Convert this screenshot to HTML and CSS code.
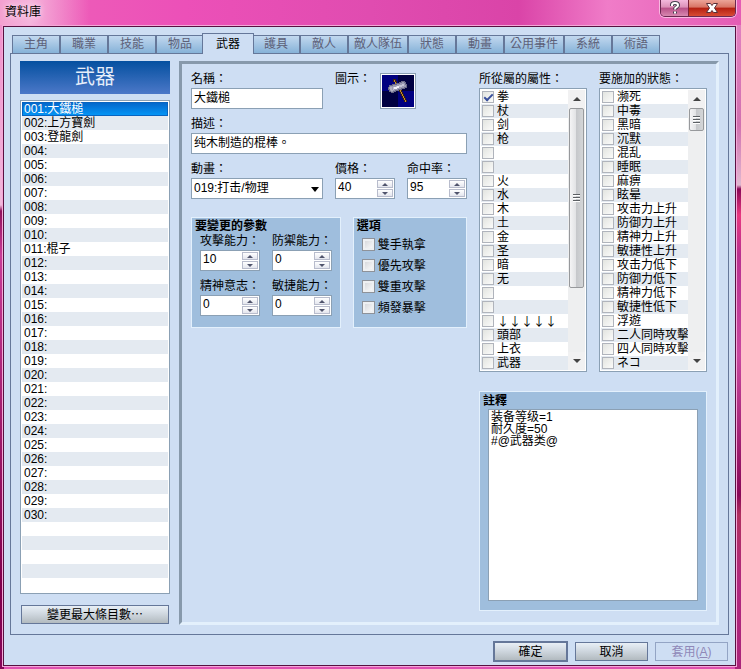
FILE: index.html
```html
<!DOCTYPE html>
<html lang="zh-Hant">
<head>
<meta charset="utf-8">
<title>資料庫</title>
<link rel="stylesheet" href="styles.css">
</head>
<body>
<header class="titlebar">
  <h1 class="caption">資料庫</h1>
  <div class="caption-buttons">
    <button class="cap cap-help" type="button" aria-label="說明">
      <svg width="12" height="14" viewBox="0 0 12 14"><path d="M3 5V4q0-2 3-2t3 2.200q0 1.300-1.500 2T6 8.500M6 10.500v2" fill="none" stroke="#454050" stroke-width="4"/><path d="M3 5V4q0-2 3-2t3 2.200q0 1.300-1.500 2T6 8.500M6 10.500v2" fill="none" stroke="#fff" stroke-width="2"/></svg>
    </button>
    <button class="cap cap-close" type="button" aria-label="關閉">
      <svg width="14" height="12" viewBox="0 0 14 12"><path d="M1.500 1.500h4L7 3.500l1.500-2h4L9.500 6l3 4.500h-4L7 8.500l-1.500 2h-4L4.500 6z" fill="#fff" stroke="#5a3038"/></svg>
    </button>
  </div>
</header>
<main class="window">
  <nav class="tabs" role="tablist">
    <button class="tab" role="tab">主角</button>
    <button class="tab" role="tab">職業</button>
    <button class="tab" role="tab">技能</button>
    <button class="tab" role="tab">物品</button>
    <button class="tab active" role="tab" aria-selected="true">武器</button>
    <button class="tab" role="tab">護具</button>
    <button class="tab" role="tab">敵人</button>
    <button class="tab wide" role="tab">敵人隊伍</button>
    <button class="tab" role="tab">狀態</button>
    <button class="tab" role="tab">動畫</button>
    <button class="tab wide" role="tab">公用事件</button>
    <button class="tab" role="tab">系統</button>
    <button class="tab" role="tab">術語</button>
  </nav>
  <section class="page">
    <aside class="side">
      <h2 class="banner">武器</h2>
      <ul class="records" role="listbox" aria-label="武器">
        <li class="selected" role="option" aria-selected="true">001:大鐵槌</li>
        <li>002:上方寶劍</li><li>003:登龍劍</li><li>004:</li><li>005:</li>
        <li>006:</li><li>007:</li><li>008:</li><li>009:</li><li>010:</li>
        <li>011:棍子</li><li>012:</li><li>013:</li><li>014:</li><li>015:</li>
        <li>016:</li><li>017:</li><li>018:</li><li>019:</li><li>020:</li>
        <li>021:</li><li>022:</li><li>023:</li><li>024:</li><li>025:</li>
        <li>026:</li><li>027:</li><li>028:</li><li>029:</li><li>030:</li>
        <li></li><li></li><li></li><li></li><li></li>
      </ul>
      <button class="btn max-btn" type="button">變更最大條目數⋯</button>
    </aside>
    <div class="editor">
      <div class="form">
        <div class="row">
          <div class="field grow2">
            <label for="name">名稱：</label>
            <input class="box" id="name" type="text" value="大鐵槌">
          </div>
          <div class="icon-field grow2">
            <span>圖示：</span>
            <button class="icon-box" type="button" aria-label="圖示">
              <svg width="32" height="32" viewBox="0 0 32 32" shape-rendering="crispEdges">
                <rect width="32" height="32" fill="#000040"/>
                <path d="M0 0h16v16H0zM16 16h16v16H16z" fill="#000080"/>
                <path d="M11 4h3v2h1v3h-2V7h-2zM17 15h3v2h1v2h1v2h1v2h1v2h1v2h-3v-2h-1v-2h-1v-2h-1v-2h-1v-2h-1z" fill="#3c2408"/>
                <path d="M12 5h1v2h1v2h-1V7h-1zM18 15h1v2h1v2h1v2h1v2h1v2h1v2h-1v-2h-1v-2h-1v-2h-1v-2h-1v-2h-1z" fill="#c08838"/>
                <path d="M6 12h1v-2h3V9h4V8h3V7h2V6h4v1h1v2h1v4h-2v1h-3v1h-3v1h-3v1h-2v1H9v-1H7v-2H6z" fill="#6c6c88"/>
                <path d="M7 12h1v-1h3v-1h4V9h3V8h2V7h2v1h1v2h1v2h-2v1h-3v1h-3v1h-3v1h-2v1H9v-1H8v-2H7z" fill="#9c9cb4"/>
                <path d="M11 12h3v-1h3v-1h3V9h2v2h-2v1h-3v1h-3v1h-2v1h-1z" fill="#c4c4d4"/>
                <path d="M12 12h3v-1h2v2h-2v1h-3z" fill="#f0f0f8"/>
                <path d="M8 12h2v3h1v1H9v-1H8z" fill="#b4b4c4"/>
              </svg>
            </button>
          </div>
        </div>
        <div class="row">
          <div class="field grow4">
            <label for="desc">描述：</label>
            <input class="box" id="desc" type="text" value="纯木制造的棍棒。">
          </div>
        </div>
        <div class="row">
          <div class="field grow2">
            <label for="anim">動畫：</label>
            <div class="combo">
              <select class="box" id="anim"><option>019:打击/物理</option></select>
              <svg class="arrow" width="8" height="5" viewBox="0 0 8 5"><path d="M0 0h8L4 5z"/></svg>
            </div>
          </div>
          <div class="field grow1">
            <label for="price">價格：</label>
            <div class="spin"><input id="price" type="text" value="40"><span class="steps"><button class="up" type="button" aria-label="增加"></button><button class="down" type="button" aria-label="減少"></button></span></div>
          </div>
          <div class="field grow1">
            <label for="hit">命中率：</label>
            <div class="spin"><input id="hit" type="text" value="95"><span class="steps"><button class="up" type="button" aria-label="增加"></button><button class="down" type="button" aria-label="減少"></button></span></div>
          </div>
        </div>
        <div class="groups">
          <section class="group params">
            <h3>要變更的參數</h3>
            <div class="param-grid">
              <div class="field">
                <label for="atk">攻擊能力：</label>
                <div class="spin"><input id="atk" type="text" value="10"><span class="steps"><button class="up" type="button" aria-label="增加"></button><button class="down" type="button" aria-label="減少"></button></span></div>
              </div>
              <div class="field">
                <label for="def">防禦能力：</label>
                <div class="spin"><input id="def" type="text" value="0"><span class="steps"><button class="up" type="button" aria-label="增加"></button><button class="down" type="button" aria-label="減少"></button></span></div>
              </div>
              <div class="field">
                <label for="spi">精神意志：</label>
                <div class="spin"><input id="spi" type="text" value="0"><span class="steps"><button class="up" type="button" aria-label="增加"></button><button class="down" type="button" aria-label="減少"></button></span></div>
              </div>
              <div class="field">
                <label for="agi">敏捷能力：</label>
                <div class="spin"><input id="agi" type="text" value="0"><span class="steps"><button class="up" type="button" aria-label="增加"></button><button class="down" type="button" aria-label="減少"></button></span></div>
              </div>
            </div>
          </section>
          <section class="group options">
            <h3>選項</h3>
            <label class="option"><input type="checkbox">雙手執拿</label>
            <label class="option"><input type="checkbox">優先攻擊</label>
            <label class="option"><input type="checkbox">雙重攻擊</label>
            <label class="option"><input type="checkbox">頻發暴擊</label>
          </section>
        </div>
      </div>
      <div class="right">
        <div class="lists">
          <div class="field">
            <span class="heading">所從屬的屬性：</span>
            <div class="checklist">
              <div class="items">
                <label><input type="checkbox" checked>拳</label>
                <label><input type="checkbox">杖</label>
                <label><input type="checkbox">剑</label>
                <label><input type="checkbox">枪</label>
                <label><input type="checkbox"></label>
                <label><input type="checkbox"></label>
                <label><input type="checkbox">火</label>
                <label><input type="checkbox">水</label>
                <label><input type="checkbox">木</label>
                <label><input type="checkbox">土</label>
                <label><input type="checkbox">金</label>
                <label><input type="checkbox">圣</label>
                <label><input type="checkbox">暗</label>
                <label><input type="checkbox">无</label>
                <label><input type="checkbox"></label>
                <label><input type="checkbox"></label>
                <label class="arrows"><input type="checkbox">↓↓↓↓↓</label>
                <label><input type="checkbox">頭部</label>
                <label><input type="checkbox">上衣</label>
                <label><input type="checkbox">武器</label>
              </div>
              <div class="scroll">
                <button class="sb-up" type="button" aria-label="向上"></button>
                <div class="track"><div class="thumb long"></div></div>
                <button class="sb-down" type="button" aria-label="向下"></button>
              </div>
            </div>
          </div>
          <div class="field">
            <span class="heading">要施加的狀態：</span>
            <div class="checklist">
              <div class="items">
                <label><input type="checkbox">濒死</label>
                <label><input type="checkbox">中毒</label>
                <label><input type="checkbox">黑暗</label>
                <label><input type="checkbox">沉默</label>
                <label><input type="checkbox">混乱</label>
                <label><input type="checkbox">睡眠</label>
                <label><input type="checkbox">麻痹</label>
                <label><input type="checkbox">眩晕</label>
                <label><input type="checkbox">攻击力上升</label>
                <label><input type="checkbox">防御力上升</label>
                <label><input type="checkbox">精神力上升</label>
                <label><input type="checkbox">敏捷性上升</label>
                <label><input type="checkbox">攻击力低下</label>
                <label><input type="checkbox">防御力低下</label>
                <label><input type="checkbox">精神力低下</label>
                <label><input type="checkbox">敏捷性低下</label>
                <label><input type="checkbox">浮遊</label>
                <label><input type="checkbox">二人同時攻擊</label>
                <label><input type="checkbox">四人同時攻擊</label>
                <label><input type="checkbox">ネコ</label>
              </div>
              <div class="scroll">
                <button class="sb-up" type="button" aria-label="向上"></button>
                <div class="track"><div class="thumb short"></div></div>
                <button class="sb-down" type="button" aria-label="向下"></button>
              </div>
            </div>
          </div>
        </div>
        <section class="group notes">
          <h3><label for="notes">註釋</label></h3>
          <textarea id="notes">装备等级=1
耐久度=50
#@武器类@</textarea>
        </section>
      </div>
    </div>
  </section>
  <footer class="actions">
    <button class="btn primary" type="button">確定</button>
    <button class="btn" type="button">取消</button>
    <button class="btn" type="button" disabled>套用(<u>A</u>)</button>
  </footer>
</main>
</body>
</html>
```
FILE: styles.css
```css
:root {
  --face: #cedef3;
  --line: #8ba0b4;
  --edge: #657799;
  --group: #9fbedd;
  --light: #e3f0fc;
  --stripe: #e4eaf1;
}

* { box-sizing: border-box; }

body {
  margin: 0;
  padding: 0 5px 2px 3px;
  font: 12px/14px "Liberation Sans", "Noto Sans CJK TC", sans-serif;
  color: #000;
  background:
    linear-gradient(90deg, #f3a0d0 0, #f5b4dc 30px, transparent 90px) 0 0 / 100% 25px no-repeat,
    linear-gradient(90deg, #ee62b8, #ec50b8 25%, #e04cb0 50%, #da44a8 70%, #f07cc8 82%, #e45cb4) 0 0 / 100% 25px no-repeat,
    linear-gradient(#f090cc 0, #f0b8dc 180px, #90105c 186px, #c83c98 230px, #a01c6c 400px, #80004c 560px, #88085c) 0 25px / 4px 100% no-repeat,
    linear-gradient(#e080c0 0, #d070b0 100px, #e0b8d0 160px, #880858 164px, #e83880 190px, #b83090 230px, #c848a0 330px, #880858 470px, #b03060 490px, #b02880 560px, #a82478) 100% 25px / 6px 100% no-repeat,
    #e050b0;
}

button, input, select, textarea { font: inherit; color: inherit; margin: 0; }
button { padding: 0; }
h1, h2, h3, ul { margin: 0; padding: 0; font-size: inherit; list-style: none; }

/* Title bar */
.titlebar { display: flex; justify-content: space-between; align-items: flex-start; height: 25px; padding-left: 2px; }
.caption { padding-top: 5px; font-weight: 400; text-shadow: 0 0 6px #fff; }
.caption-buttons { display: flex; height: 17px; border: 1px solid #6a2850; border-top: 0; border-radius: 0 0 5px 5px; overflow: hidden; box-shadow: 0 0 0 1px #f8b8e0; }
.cap { display: flex; align-items: center; justify-content: center; border: 0; }
.cap-help { width: 27px; background: linear-gradient(#f4b8dc, #dc90b8 45%, #b85088 50%, #d888b0); }
.cap-close { width: 47px; border-left: 1px solid #7a2038; background: linear-gradient(#eca498, #d87464 45%, #b42010 50%, #d84c34); }

/* Window and tabs */
.window { margin-top: 1px; padding: 6px 6px 3px; background: var(--face); border: 1px solid #581040; box-shadow: 0 0 0 1px #f4a8d8; }
.tabs { display: flex; align-items: flex-end; height: 20px; padding-left: 2px; }
.tab { width: 48px; height: 18px; padding-bottom: 1px; border: 1px solid var(--edge); border-bottom: 0; background: linear-gradient(#c2d8ef, #86b2d8); color: #5d6078; }
.tab.wide { width: 60px; }
.tab.active { position: relative; width: 52px; height: 21px; margin: 0 -2px -1px; background: var(--face); color: #000; }
.page { display: flex; gap: 9px; padding: 7px 9px 9px; border: 1px solid var(--edge); }

/* Record list */
.side { flex: none; width: 150px; }
.banner { height: 33px; line-height: 33px; font-size: 20px; font-weight: 400; text-align: center; color: #e6eefa; background: linear-gradient(#0450a0, #4c78c8); }
.records { margin-top: 6px; padding: 1px; border: 1px solid var(--line); background: #fff; }
.records li { height: 14px; padding-left: 2px; white-space: nowrap; }
.records li:nth-child(even) { background: var(--stripe); }
.records .selected { color: #fff; background: linear-gradient(#0464c8, #0498f8); box-shadow: inset 0 0 0 1px #0864c0; }
.btn { height: 19px; border: 1px solid var(--edge); background: linear-gradient(#e8eff6, #d0d8e0 45%, #b2babf); }
.max-btn { display: block; width: 148px; margin: 11px auto 0; }

/* Editor */
.editor { flex: 1; min-width: 0; display: flex; gap: 12px; padding: 7px 9px 11px; border: 3px solid; border-color: #8799ab var(--light) var(--light) #8799ab; }
.form { flex: 1; min-width: 0; }
.row { display: flex; gap: 12px; margin-bottom: 7px; }
.field { display: flex; flex-direction: column; gap: 1px; min-width: 0; }
.field > label, .heading { height: 16px; line-height: 16px; white-space: nowrap; }
.grow1 { flex: 0 0 60px; }
.grow2 { flex: 1 1 132px; }
.grow4 { flex: 1; }
.box { width: 100%; height: 21px; padding: 0 2px 4px; border: 1px solid var(--line); border-radius: 0; background: #fff; }
.icon-field { display: flex; gap: 9px; line-height: 16px; }
.icon-box { width: 36px; height: 36px; margin-top: 2px; padding: 1px; border: 1px solid var(--line); background: #fff; }
.icon-box svg { display: block; }
.combo { position: relative; }
.combo select { display: block; appearance: none; padding-bottom: 1px; }
.arrow { position: absolute; right: 4px; top: 9px; pointer-events: none; }
.spin { display: flex; height: 21px; padding: 1px; border: 1px solid var(--line); background: #fff; }
.spin input { flex: 1; min-width: 0; width: 0; padding: 0 1px 3px; border: 0; background: transparent; }
.steps { display: flex; flex-direction: column; gap: 1px; width: 16px; }
.steps button { flex: 1; display: flex; align-items: center; justify-content: center; border: 1px solid #b8bccc; background: linear-gradient(#fff, #e4e6ee); }
.steps button::before { content: ""; border: solid transparent; border-width: 0 3px; }
.steps .up::before { border-bottom: 3px solid #50546c; }
.steps .down::before { border-top: 3px solid #50546c; }

/* Groups */
.groups { display: flex; gap: 12px; margin-top: 18px; }
.group { border: 1px solid var(--light); background: var(--group); }
.group h3 { height: 14px; padding-left: 3px; font-weight: 700; }
.params { flex: 150 1 0; height: 111px; padding-top: 1px; }
.param-grid { display: grid; grid-template-columns: 60px 60px; gap: 7px 12px; padding-left: 8px; }
.options { flex: 114 1 0; padding-top: 1px; }
.option { display: flex; align-items: center; gap: 3px; height: 21px; padding-left: 8px; }
.options .option:nth-of-type(1) { margin-top: 1px; }
.option input { appearance: none; width: 13px; height: 13px; border: 1px solid #8e9299; background: linear-gradient(135deg, #d0d2d6, #fff); box-shadow: inset 0 0 0 2px #eef0f2; }

/* Check lists */
.right { flex: none; width: 228px; }
.lists { display: grid; grid-template-columns: 1fr 1fr; gap: 12px; }
.checklist { display: flex; padding: 1px; border: 1px solid var(--line); background: #fff; }
.items { flex: 1; min-width: 0; overflow: hidden; }
.items label { display: flex; align-items: center; gap: 3px; height: 14px; padding-left: 1px; white-space: nowrap; }
.items label:nth-child(even) { background: var(--stripe); }
.items input { appearance: none; flex: none; position: relative; width: 12px; height: 12px; border: 1px solid #b0b4bc; background: linear-gradient(135deg, #e2e4e0, #fbfbfa); }
.items input:checked::after { content: ""; position: absolute; left: 3px; top: 0; width: 3px; height: 7px; border: solid #3a509c; border-width: 0 2px 2px 0; transform: rotate(45deg); }
.arrows { font-family: "Noto Sans CJK TC", sans-serif; }
.scroll { display: flex; flex-direction: column; width: 17px; background: #eeeff0; }
.scroll button { display: flex; align-items: center; justify-content: center; height: 18px; border: 0; background: #f1f1f2; }
.scroll button::before { content: ""; border: solid transparent; border-width: 0 4px; }
.scroll .sb-up::before { border-bottom: 4px solid #444; }
.scroll .sb-down::before { border-top: 4px solid #444; }
.track { flex: 1; }
.thumb { display: flex; align-items: center; justify-content: center; width: 15px; margin-left: 1px; border: 1px solid #97999c; border-radius: 2px; background: linear-gradient(90deg, #f4f4f5, #e2e3e5 45%, #c6c8cb 50%, #d4d6d8); }
.thumb::before { content: ""; width: 7px; height: 8px; background: repeating-linear-gradient(#5c6064 0 1px, #fff 1px 2px, transparent 2px 3px); }
.long { height: 180px; }
.short { height: 23px; }

/* Notes */
.notes { margin-top: 19px; padding: 2px 8px 9px; }
.notes h3 { height: 15px; margin-left: -8px; }
.notes textarea { display: block; width: 100%; height: 192px; padding: 1px 2px; border: 1px solid var(--line); border-radius: 0; background: #fff; line-height: 12px; resize: none; }

/* Dialog buttons */
.actions { display: flex; align-items: center; justify-content: flex-end; gap: 7px; margin-top: 6px; padding-right: 1px; }
.actions .btn { width: 73px; }
.actions .primary { width: 75px; height: 21px; border-width: 2px; }
.actions .btn:disabled { border-color: #93a4c4; background: transparent; color: #8f88b8; }
```
